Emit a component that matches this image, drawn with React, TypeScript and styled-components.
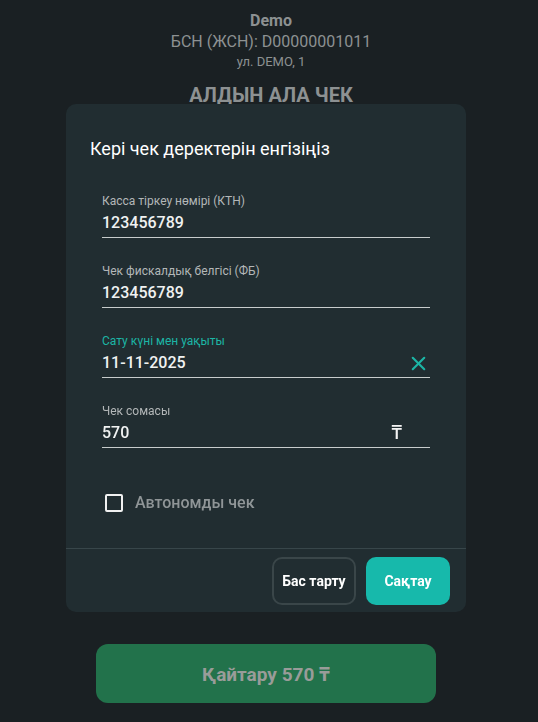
import React, { useState } from 'react';
import styled, { createGlobalStyle } from 'styled-components';
import { X } from 'lucide-react';

const GlobalStyle = createGlobalStyle`
  html, body {
    margin: 0;
    padding: 0;
    background: #1a2023;
    font-family: Roboto, "Noto Sans", "Liberation Sans", sans-serif;
  }
  * { box-sizing: border-box; }
`;

const Page = styled.div`
  height: 722px;
  display: flex;
  flex-direction: column;
  align-items: center;
  padding-top: 11px;
  color: #8d9192;
`;

const Company = styled.div`
  font-size: 16px;
  font-weight: 700;
  line-height: 20px;
  margin-left: 4px;
`;

const TaxId = styled.div`
  font-size: 16px;
  line-height: 22px;
  margin-left: 4px;
`;

const Address = styled.div`
  font-size: 13px;
  line-height: 18px;
  margin-left: 4px;
`;

const DocTitle = styled.div`
  margin-top: 12px;
  font-size: 20px;
  font-weight: 700;
  line-height: 24px;
  margin-left: 4px;
`;

const Spacer = styled.div`
  flex: 1;
`;

const RefundButton = styled.button`
  width: 340px;
  height: 59px;
  margin: 0 6px 19px 0;
  border: none;
  border-radius: 12px;
  background: #22724b;
  color: #999c99;
  font-family: inherit;
  font-size: 19px;
  font-weight: 700;
`;

const Overlay = styled.div`
  position: fixed;
  inset: 0;
  display: flex;
  justify-content: center;
  align-items: flex-start;
  padding: 104px 6px 0 0;
`;

const Dialog = styled.div`
  width: 400px;
  height: 508px;
  background: #212d31;
  border-radius: 10px;
  display: flex;
  flex-direction: column;
`;

const DialogTitle = styled.h2`
  margin: 0;
  padding: 34px 24px 0 24px;
  font-size: 18px;
  font-weight: 400;
  line-height: 22px;
  color: #ffffff;
`;

const Form = styled.div`
  padding: 33px 36px 0 36px;
  display: flex;
  flex-direction: column;
  gap: 25px;
`;

const Field = styled.div`
  display: flex;
  flex-direction: column;
  border-bottom: 1px solid #c8cccc;
`;

const Label = styled.label<{ $active?: boolean }>`
  font-size: 12px;
  line-height: 16px;
  color: ${({ $active }) => ($active ? '#1cb5a5' : '#b3b7b8')};
`;

const ValueRow = styled.div`
  display: flex;
  align-items: center;
  justify-content: space-between;
  height: 28px;
`;

const Value = styled.span`
  font-size: 16px;
  font-weight: 500;
  line-height: 22px;
  color: #f0f2f2;
`;

const ClearIcon = styled(X)`
  width: 23px;
  height: 23px;
  color: #1cb5a5;
`;

const Currency = styled.span`
  font-size: 19px;
  font-weight: 500;
  line-height: 22px;
  color: #f4f4f4;
  margin-right: 28px;
`;

const CheckRow = styled.label`
  display: flex;
  align-items: center;
  gap: 12px;
  padding: 45px 0 0 39px;
  font-size: 16px;
  font-weight: 500;
  color: #8f9597;
`;

const Box = styled.span`
  width: 18px;
  height: 18px;
  border: 2px solid #f1f1f1;
  border-radius: 2px;
`;

const Footer = styled.div`
  margin-top: auto;
  border-top: 1px solid #38464a;
  padding: 8px 16px 7px 16px;
  display: flex;
  justify-content: flex-end;
  gap: 10px;
`;

const ActionButton = styled.button<{ $primary?: boolean }>`
  height: 48px;
  width: 84px;
  border-radius: 10px;
  border: ${({ $primary }) => ($primary ? 'none' : '2px solid #3a4649')};
  background: ${({ $primary }) => ($primary ? '#17b9ab' : 'transparent')};
  color: #ffffff;
  font-family: inherit;
  font-size: 14px;
  font-weight: 700;
`;

const fields = [
  { label: 'Касса тіркеу нөмірі (КТН)', value: '123456789' },
  { label: 'Чек фискалдық белгісі (ФБ)', value: '123456789' },
  { label: 'Сату күні мен уақыты', value: '11-11-2025', active: true },
  { label: 'Чек сомасы', value: '570', currency: true },
];

export default function App() {
  const [offline] = useState(false);

  return (
    <>
      <GlobalStyle />
      <Page>
        <Company>Demo</Company>
        <TaxId>БСН (ЖСН): D00000001011</TaxId>
        <Address>ул. DEMO, 1</Address>
        <DocTitle>АЛДЫН АЛА ЧЕК</DocTitle>
        <Spacer />
        <RefundButton>Қайтару 570 ₸</RefundButton>
      </Page>
      <Overlay>
        <Dialog>
          <DialogTitle>Кері чек деректерін енгізіңіз</DialogTitle>
          <Form>
            {fields.map(f => (
              <Field key={f.label}>
                <Label $active={f.active}>{f.label}</Label>
                <ValueRow>
                  <Value>{f.value}</Value>
                  {f.active && <ClearIcon strokeWidth={2.2} />}
                  {f.currency && <Currency>₸</Currency>}
                </ValueRow>
              </Field>
            ))}
          </Form>
          <CheckRow>
            <Box data-checked={offline} />
            Автономды чек
          </CheckRow>
          <Footer>
            <ActionButton>Бас тарту</ActionButton>
            <ActionButton $primary>Сақтау</ActionButton>
          </Footer>
        </Dialog>
      </Overlay>
    </>
  );
}
